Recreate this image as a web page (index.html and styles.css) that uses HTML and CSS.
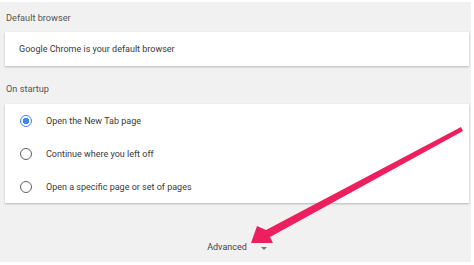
FILE: index.html
```html
<!DOCTYPE html>
<html lang="en">
<head>
    <meta charset="UTF-8">
    <meta name="viewport" content="width=device-width, initial-scale=1.0">
    <title>Settings</title>
    <link rel="stylesheet" href="styles.css">
</head>
<body>
    <div class="page">
        <div class="section-title">Default browser</div>
        <div class="card">
            <div class="card-text">Google Chrome is your default browser</div>
        </div>

        <div class="section-title startup">On startup</div>
        <div class="card">
            <div class="radio-row">
                <span class="radio checked"></span>
                <span>Open the New Tab page</span>
            </div>
            <div class="radio-row">
                <span class="radio"></span>
                <span>Continue where you left off</span>
            </div>
            <div class="radio-row">
                <span class="radio"></span>
                <span>Open a specific page or set of pages</span>
            </div>
        </div>

        <div class="advanced">
            <span>Advanced</span>
            <span class="caret"></span>
        </div>

        <svg class="arrow" viewBox="0 0 474 265" width="474" height="265">
            <polygon points="251,243 257,226 266,230 461,127 463,131 270,237 273,243" fill="#ee1f5e"/>
        </svg>
    </div>
</body>
</html>
```

FILE: styles.css
```css
body {
    margin: 0;
    background: #fff;
    font-family: Roboto, "Liberation Sans", sans-serif;
    font-size: 9px;
    color: #3a3a3a;
}
.page {
    position: relative;
    margin: 2px 3px 0 0;
    height: 260px;
    padding: 0 2px 0 5px;
    background: #f1f1f1;
}
.section-title {
    padding: 8px 1px 6px;
    line-height: 16px;
    font-size: 9.2px;
    color: #555;
}
.section-title.startup {
    padding: 15px 1px 7px;
}
.card {
    background: #fff;
    box-shadow: 0 1px 2px rgba(0, 0, 0, 0.25);
}
.card-text {
    padding-left: 14px;
    line-height: 34px;
}
.radio-row {
    display: flex;
    align-items: center;
    height: 33px;
    padding-left: 15px;
    gap: 14px;
}
.radio {
    box-sizing: border-box;
    width: 12px;
    height: 12px;
    border: 1.5px solid #5f5f5f;
    border-radius: 50%;
}
.radio.checked {
    border-color: #4285f4;
    background: radial-gradient(circle, #4285f4 0 3px, transparent 3.5px);
}
.advanced {
    display: flex;
    justify-content: center;
    align-items: center;
    gap: 14px;
    padding-top: 36px;
    line-height: 16px;
    color: #444;
}
.caret {
    width: 0;
    height: 0;
    border-left: 3px solid transparent;
    border-right: 3px solid transparent;
    border-top: 3px solid #777;
    margin-top: 2px;
}
.arrow {
    position: absolute;
    left: 0;
    top: -2px;
}
```
